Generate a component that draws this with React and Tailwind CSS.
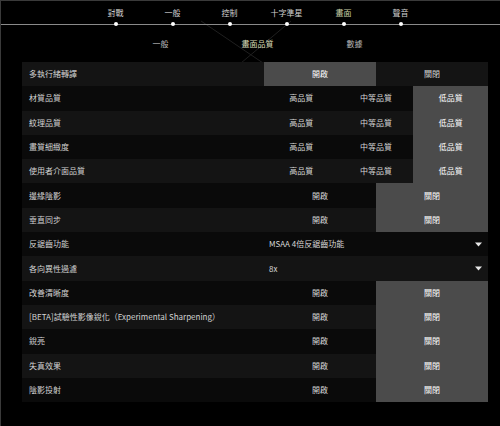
const tabs = ["對戰", "一般", "控制", "十字準星", "畫面", "聲音"];
const subTabs = ["一般", "畫面品質", "數據"];

const rows = [
  { label: "多執行緒轉譯", type: "two", selected: 0 },
  { label: "材質品質", type: "three", selected: 2 },
  { label: "紋理品質", type: "three", selected: 2 },
  { label: "畫質細緻度", type: "three", selected: 2 },
  { label: "使用者介面品質", type: "three", selected: 2 },
  { label: "邊緣陰影", type: "two", selected: 1 },
  { label: "垂直同步", type: "two", selected: 1 },
  { label: "反鋸齒功能", type: "select", value: "MSAA 4倍反鋸齒功能" },
  { label: "各向異性過濾", type: "select", value: "8x" },
  { label: "改善清晰度", type: "two", selected: 1 },
  { label: "[BETA]試驗性影像銳化（Experimental Sharpening）", type: "two", selected: 1 },
  { label: "銳亮", type: "two", selected: 1 },
  { label: "失真效果", type: "two", selected: 1 },
  { label: "陰影投射", type: "two", selected: 1 },
];

function Option({ text, active }) {
  return (
    <div
      className={
        "flex flex-1 items-center justify-center " +
        (active ? "bg-[#4b4b4b] text-white" : "text-[#d6d6d6]")
      }
    >
      {text}
    </div>
  );
}

function Control({ row }) {
  if (row.type === "select") {
    return (
      <div className="flex flex-1 items-center justify-between pl-[5px] pr-[6px] text-[#d6d6d6]">
        <span>{row.value}</span>
        <svg width="7" height="5" viewBox="0 0 7 5">
          <path d="M0 0.5h7L3.5 4.5z" fill="#e8e8e8" />
        </svg>
      </div>
    );
  }
  const opts = row.type === "two" ? ["開啟", "關閉"] : ["高品質", "中等品質", "低品質"];
  return (
    <div className="flex flex-1">
      {opts.map((o, i) => (
        <Option key={o} text={o} active={i === row.selected} />
      ))}
    </div>
  );
}

export default function App() {
  return (
    <div
      className="relative h-[426px] w-[500px] overflow-hidden border-l border-t border-[#3a3a3a] bg-black text-[8px] leading-none"
      style={{ fontFamily: '"Noto Sans CJK TC", "Noto Sans", sans-serif' }}
    >
      {/* faint decorative strokes behind the panel */}
      <svg className="pointer-events-none absolute inset-0" width="500" height="426" aria-hidden="true">
        <path d="M200 20 L262 62 M290 20 L240 62 M250 62 L250 120" stroke="#1f1f1f" strokeWidth="1" fill="none" />
        <path d="M70 270 L160 380" stroke="#181818" strokeWidth="1" fill="none" />
      </svg>

      <div className="absolute left-0 right-0 top-[23px] h-px bg-[#8a8a8a]" />

      <div className="relative flex h-[33px] pl-[86px]">
        {tabs.map((t) => (
          <div key={t} className="flex w-[57px] flex-col items-center">
            <span className={"mt-[8px] " + (t === "畫面" ? "text-[#c9cfa6]" : "text-[#cfcfcf]")}>{t}</span>
            <span className="mt-[5px] h-[4px] w-[4px] rounded-full bg-white" />
          </div>
        ))}
      </div>

      <div className="relative flex h-[19px] items-center pl-[111px]">
        {subTabs.map((t) => (
          <div
            key={t}
            className={"w-[97px] text-center " + (t === "畫面品質" ? "text-[#d9dcb8]" : "text-[#b8b8b8]")}
          >
            {t}
          </div>
        ))}
      </div>

      <div className="relative ml-[21px] mt-[9px] w-[466px]">
        {rows.map((row, i) => (
          <div
            key={row.label}
            className={"flex h-[24.3px] " + (i % 2 === 0 ? "bg-[#141414]" : "bg-[#0a0a0a]")}
          >
            <div className="flex w-[242px] items-center pl-[7px] text-[#d2d2d2]">{row.label}</div>
            <Control row={row} />
          </div>
        ))}
      </div>
    </div>
  );
}
